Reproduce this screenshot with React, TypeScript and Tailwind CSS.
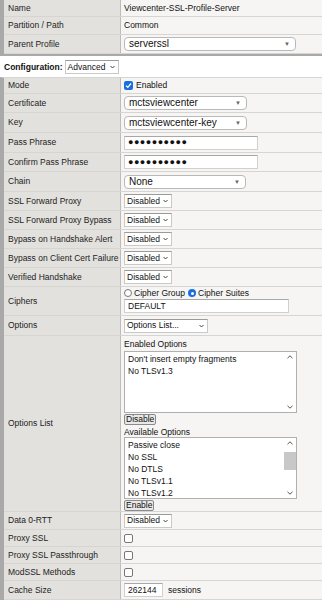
import React from 'react';

const font = { fontFamily: '"Liberation Sans", Arial, sans-serif' };

function Row({ label, children, h = 'h-[19px]' }: { label: string; children?: React.ReactNode; h?: string }) {
  return (
    <div className={`flex border-b border-[#d6d5d2] ${h}`}>
      <div className="w-[117px] shrink-0 bg-[#e2e1de] border-r border-[#bdbcb9] pl-[4px] flex items-center text-[#222]">
        {label}
      </div>
      <div className="flex-1 bg-[#f6f5f3] pl-[3px] flex items-center">{children}</div>
    </div>
  );
}

function RoundSelect({ value, w }: { value: string; w: string }) {
  return (
    <div className={`${w} h-[14px] bg-white border border-[#b9b9b9] rounded-[4px] flex items-center justify-between pl-[4px] pr-[5px] text-[10px] text-[#111]`}>
      <span>{value}</span>
      <span className="text-[6px] text-[#666]">▼</span>
    </div>
  );
}

function SmallSelect({ value, w = 'w-[48px]' }: { value: string; w?: string }) {
  return (
    <div className={`${w} h-[14px] bg-white border border-[#c9c9c9] border-t-[#9a9a9a] flex items-center justify-between pl-[2px] pr-[3px] text-[#111]`}>
      <span>{value}</span>
      <svg width="5" height="4" viewBox="0 0 5 4"><path d="M0.5 1 L2.5 3 L4.5 1" fill="none" stroke="#444" strokeWidth="1" /></svg>
    </div>
  );
}

function Input({ value, w, dots = false }: { value: string; w: string; dots?: boolean }) {
  return (
    <div className={`${w} h-[14px] bg-white border border-[#d0d0d0] border-t-[#a8a8a8] flex items-center pl-[3px] text-[#111] ${dots ? 'tracking-[0.5px] text-[9px]' : ''}`}>
      {value}
    </div>
  );
}

function Check({ on = false }: { on?: boolean }) {
  return on ? (
    <div className="w-[9px] h-[9px] rounded-[2px] bg-[#1a6fe0] flex items-center justify-center">
      <svg width="7" height="7" viewBox="0 0 7 7"><path d="M1 3.6 L2.8 5.3 L6 1.5" fill="none" stroke="#fff" strokeWidth="1.3" /></svg>
    </div>
  ) : (
    <div className="w-[9px] h-[9px] rounded-[2px] bg-white border border-[#777]" />
  );
}

function Btn({ label }: { label: string }) {
  return (
    <div className="inline-flex h-[11px] items-center px-[1px] bg-[#e9e9e9] border border-[#8a8a8a] rounded-[2px] text-[#111] leading-none">
      {label}
    </div>
  );
}

function ListBox({ items, scroll }: { items: string[]; scroll: 'top' | 'mid' }) {
  return (
    <div className="w-[173px] h-[62px] bg-white border border-[#b0b0b0] flex">
      <div className="flex-1 pl-[3px] pt-[2px] flex flex-col gap-[2px] leading-[10px] text-[#111]">
        {items.map((i) => (
          <div key={i}>{i}</div>
        ))}
      </div>
      <div className="w-[12px] flex flex-col items-center justify-between py-[3px]">
        <svg width="6" height="4" viewBox="0 0 6 4"><path d="M0.5 3.2 L3 0.8 L5.5 3.2" fill="none" stroke="#555" strokeWidth="1" /></svg>
        {scroll === 'mid' ? <div className="w-[12px] h-[18px] bg-[#c8c8c8] -mt-[14px]" /> : <div />}
        <svg width="6" height="4" viewBox="0 0 6 4"><path d="M0.5 0.8 L3 3.2 L5.5 0.8" fill="none" stroke="#555" strokeWidth="1" /></svg>
      </div>
    </div>
  );
}

export default function App() {
  return (
    <div className="w-[322px] h-[600px] overflow-hidden bg-white text-[8.5px] leading-none" style={font}>
      <div className="border-l-[4px] border-[#a9a9a9] border-b-[2px] border-b-[#a9a9a9]">
        <Row label="Name" h="h-[17px]">
          <span className="text-[#111]">Viewcenter-SSL-Profile-Server</span>
        </Row>
        <Row label="Partition / Path" h="h-[18px]">
          <span className="text-[#111]">Common</span>
        </Row>
        <Row label="Parent Profile" h="h-[19px]">
          <RoundSelect value="serverssl" w="w-[172px]" />
        </Row>
      </div>
      <div className="h-[21px] flex items-center pl-[4px] pt-[1px] gap-[2px]">
        <span className="font-bold text-[8.5px] text-[#111]">Configuration:</span>
        <SmallSelect value="Advanced" w="w-[54px]" />
      </div>
      <div className="border-l-[4px] border-[#a9a9a9] border-t border-t-[#d6d5d2]">
        <Row label="Mode" h="h-[16px]">
          <div className="flex items-center gap-[3px] text-[#111]">
            <Check on />
            <span>Enabled</span>
          </div>
        </Row>
        <Row label="Certificate">
          <RoundSelect value="mctsviewcenter" w="w-[123px]" />
        </Row>
        <Row label="Key" h="h-[20px]">
          <RoundSelect value="mctsviewcenter-key" w="w-[123px]" />
        </Row>
        <Row label="Pass Phrase" h="h-[20px]">
          <Input value="●●●●●●●●●●" w="w-[134px]" dots />
        </Row>
        <Row label="Confirm Pass Phrase">
          <Input value="●●●●●●●●●●" w="w-[134px]" dots />
        </Row>
        <Row label="Chain" h="h-[20px]">
          <RoundSelect value="None" w="w-[122px]" />
        </Row>
        <Row label="SSL Forward Proxy">
          <SmallSelect value="Disabled" />
        </Row>
        <Row label="SSL Forward Proxy Bypass">
          <SmallSelect value="Disabled" />
        </Row>
        <Row label="Bypass on Handshake Alert">
          <SmallSelect value="Disabled" />
        </Row>
        <Row label="Bypass on Client Cert Failure">
          <SmallSelect value="Disabled" />
        </Row>
        <Row label="Verified Handshake">
          <SmallSelect value="Disabled" />
        </Row>
        <Row label="Ciphers" h="h-[29px]">
          <div className="flex flex-col gap-[2px] text-[#111]">
            <div className="flex items-center gap-[2px]">
              <div className="w-[8px] h-[8px] rounded-full border border-[#777] bg-white" />
              <span>Cipher Group</span>
              <div className="w-[8px] h-[8px] rounded-full bg-[#1a6fe0] flex items-center justify-center ml-[1px]">
                <div className="w-[3px] h-[3px] rounded-full bg-white" />
              </div>
              <span>Cipher Suites</span>
            </div>
            <Input value="DEFAULT" w="w-[165px]" />
          </div>
        </Row>
        <Row label="Options" h="h-[20px]">
          <SmallSelect value="Options List..." w="w-[84px]" />
        </Row>
        <Row label="Options List" h="h-[176px]">
          <div className="flex flex-col self-start text-[#111] pt-[4px]">
            <div className="mb-[2px]">Enabled Options</div>
            <ListBox items={["Don't insert empty fragments", 'No TLSv1.3']} scroll="top" />
            <div className="mt-[1px]"><Btn label="Disable" /></div>
            <div className="mt-[3px] mb-[1px]">Available Options</div>
            <ListBox items={['Passive close', 'No SSL', 'No DTLS', 'No TLSv1.1', 'No TLSv1.2']} scroll="mid" />
            <div className="mt-[1px]"><Btn label="Enable" /></div>
          </div>
        </Row>
        <Row label="Data 0-RTT" h="h-[18px]">
          <SmallSelect value="Disabled" />
        </Row>
        <Row label="Proxy SSL" h="h-[17px]">
          <Check />
        </Row>
        <Row label="Proxy SSL Passthrough" h="h-[17px]">
          <Check />
        </Row>
        <Row label="ModSSL Methods" h="h-[17px]">
          <Check />
        </Row>
        <Row label="Cache Size" h="h-[19px]">
          <div className="flex items-center gap-[5px] text-[#111]">
            <Input value="262144" w="w-[39px]" />
            <span>sessions</span>
          </div>
        </Row>
      </div>
    </div>
  );
}
